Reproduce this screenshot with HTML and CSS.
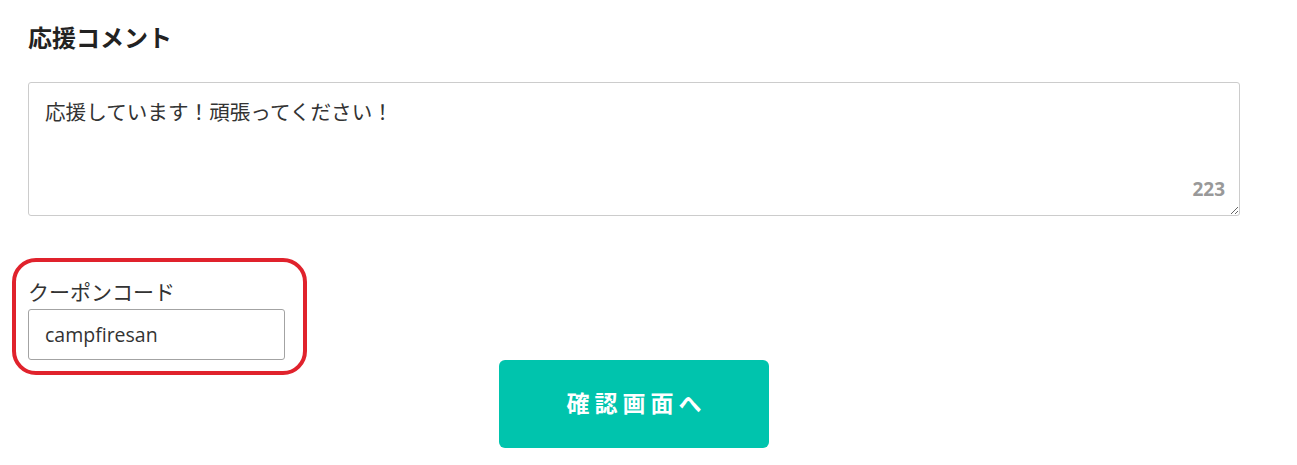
FILE: index.html
```html
<!DOCTYPE html>
<html lang="ja">
<head>
    <meta charset="UTF-8">
    <title>応援コメント</title>
    <link rel="stylesheet" href="styles.css">
</head>
<body>
    <div class="support-form">
        <div class="section-title">応援コメント</div>
        <div class="comment-box">
            <textarea class="comment-input">応援しています！頑張ってください！</textarea>
            <span class="comment-count">223</span>
        </div>
        <div class="coupon-group">
            <label class="coupon-label" for="coupon">クーポンコード</label>
            <input type="text" id="coupon" class="coupon-input" value="campfiresan">
            <span class="highlight"></span>
        </div>
        <button type="button" class="confirm-btn">確認画面へ</button>
    </div>
</body>
</html>
```

FILE: styles.css
```css
body {
    margin: 0;
    background: #fff;
    color: #333;
    font-family: 'Open Sans', 'Noto Sans CJK JP', sans-serif;
}
.support-form {
    width: 1212px;
    padding: 22px 0 0 28px;
}
.section-title {
    font-size: 24px;
    line-height: 32px;
    font-weight: 700;
    color: #222;
    margin-bottom: 28px;
}
.comment-box {
    position: relative;
}
.comment-input {
    display: block;
    box-sizing: border-box;
    width: 100%;
    height: 134px;
    margin: 0;
    padding: 14px 16px;
    border: 1px solid #ccc;
    border-radius: 3px;
    font-family: 'Open Sans', 'Noto Sans CJK JP', sans-serif;
    font-size: 20.6px;
    line-height: 30px;
    color: #333;
}
.comment-count {
    position: absolute;
    right: 15px;
    bottom: 17px;
    font-size: 19px;
    line-height: 1;
    font-weight: 700;
    color: #999;
}
.coupon-group {
    position: relative;
    width: 257px;
    margin-top: 62px;
}
.coupon-label {
    display: block;
    font-size: 21px;
    line-height: 28px;
    color: #333;
    margin-bottom: 3px;
}
.coupon-input {
    display: block;
    box-sizing: border-box;
    width: 257px;
    height: 51px;
    margin: 0;
    padding: 0 16px;
    border: 1px solid #a3a3a3;
    border-radius: 3px;
    font-family: 'Open Sans', 'Noto Sans CJK JP', sans-serif;
    font-size: 19.5px;
    color: #333;
}
.highlight {
    position: absolute;
    left: -16px;
    top: -20px;
    width: 295px;
    height: 117px;
    box-sizing: border-box;
    border: 4px solid #e0222c;
    border-radius: 24px;
    pointer-events: none;
}
.confirm-btn {
    display: block;
    width: 270px;
    height: 88px;
    margin: 0 auto;
    padding: 0 0 4px 5px;
    border: none;
    border-radius: 6px;
    background: #00c4ad;
    color: #fff;
    font-family: 'Noto Sans CJK JP', sans-serif;
    font-size: 23px;
    font-weight: 700;
    letter-spacing: 5px;
    cursor: pointer;
}
```
